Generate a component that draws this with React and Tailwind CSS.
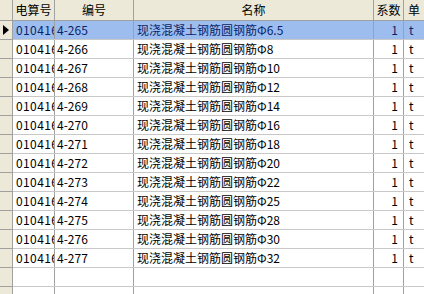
import React from "react";

const sizes = ["6.5", "8", "10", "12", "14", "16", "18", "20", "22", "25", "28", "30", "32"];

const rows = sizes.map((s, i) => ({
  code: "010416",
  no: `4-${265 + i}`,
  name: `现浇混凝土钢筋圆钢筋Φ${s}`,
  k: "1",
  unit: "t",
}));

const font = { fontFamily: '"Noto Sans CJK SC", "Liberation Sans", sans-serif' };

export default function App() {
  const all = [...rows, null, null, null];

  return (
    <div className="w-[424px] h-[294px] overflow-hidden bg-white text-[12px] leading-none text-black" style={font}>
      {/* header */}
      <div className="flex h-[21px] bg-[#ece9d8] border-b border-[#a0a0a0]">
        <div className="w-[13px] shrink-0 border-r border-[#a0a0a0]" />
        <div className="w-[42px] shrink-0 border-r border-[#a0a0a0] flex items-center justify-center">电算号</div>
        <div className="w-[79px] shrink-0 border-r border-[#a0a0a0] flex items-center justify-center">编号</div>
        <div className="w-[240px] shrink-0 border-r border-[#a0a0a0] flex items-center justify-center">名称</div>
        <div className="w-[30px] shrink-0 border-r border-[#a0a0a0] flex items-center justify-center">系数</div>
        <div className="flex-1 flex items-center pl-[4px] whitespace-nowrap">单</div>
      </div>

      {all.map((r, i) => {
        const sel = i === 0;
        return (
          <div key={i} className="flex h-[19px]">
            <div className="w-[13px] shrink-0 bg-[#ece9d8] border-r border-b border-[#a0a0a0] flex items-center justify-center">
              {sel && (
                <svg width="6" height="10" viewBox="0 0 6 10">
                  <path d="M0 0 L6 5 L0 10 Z" fill="#000" />
                </svg>
              )}
            </div>
            <div
              className={`flex flex-1 border-b border-[#c8c8c8] ${sel ? "bg-[#9dbdee] text-[#0a246a]" : ""}`}
            >
              <div className="w-[42px] shrink-0 border-r border-[#a0a0a0] flex items-center pl-[3px] overflow-hidden whitespace-nowrap tracking-[0.4px]">
                {r?.code}
              </div>
              <div className="w-[79px] shrink-0 border-r border-[#a0a0a0] flex items-center pl-[2px] whitespace-nowrap">
                {r?.no}
              </div>
              <div className="w-[240px] shrink-0 border-r border-[#a0a0a0] flex items-center pl-[3px] whitespace-nowrap overflow-hidden">
                {r?.name}
              </div>
              <div className="w-[30px] shrink-0 border-r border-[#a0a0a0] flex items-center justify-end pr-[5px]">
                {r?.k}
              </div>
              <div className="flex-1 flex items-center pl-[5px]">{r?.unit}</div>
            </div>
          </div>
        );
      })}
    </div>
  );
}
